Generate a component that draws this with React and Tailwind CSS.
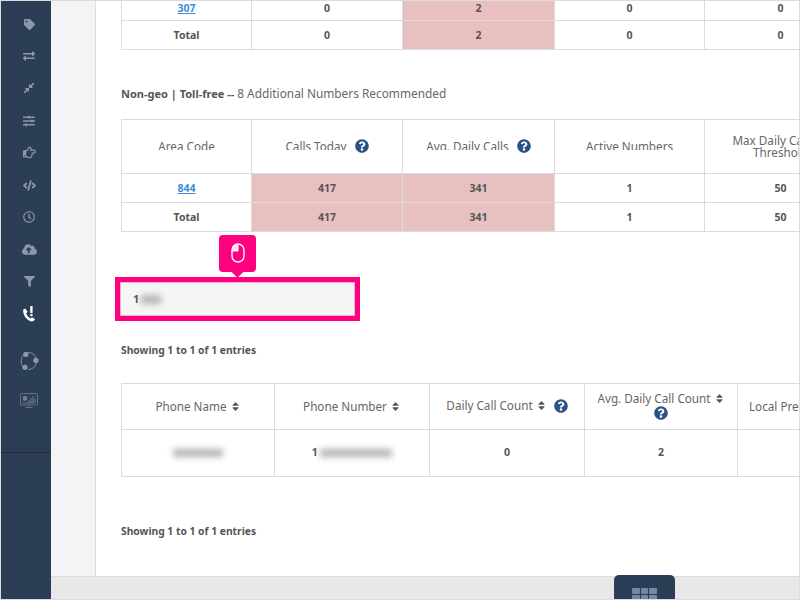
import React from 'react';
import {
  FaTag, FaExchangeAlt, FaCompressAlt, FaSlidersH, FaRegHandPointRight, FaCode,
  FaRegClock, FaCloudUploadAlt, FaFilter, FaSort, FaQuestionCircle,
} from 'react-icons/fa';

const font = "font-['Noto_Sans','Liberation_Sans',sans-serif]";

function PhoneAlert() {
  return (
    <svg width="14" height="16" viewBox="0 0 14 16" fill="white">
      <path d="M3.2 2.6 1.2 3.6C.6 8.6 4.4 14.6 9.4 15.4c1.4.2 3-.8 3.6-2.2l-3-2-1.4 1.2C6.4 11.6 4.6 9 4.2 7l1.4-1.2z" />
      <rect x="8.2" y="0" width="2.4" height="7" rx="0.6" />
      <rect x="8.2" y="8" width="2.4" height="2.2" rx="0.6" />
    </svg>
  );
}

function ShareRing() {
  return (
    <svg width="20" height="20" viewBox="0 0 22 22" fill="#8c98a8" stroke="none">
      <path d="M6 4.2A9 9 0 0 0 5 18M10 20.4a9 9 0 0 0 9-7.4M19 8.4A9 9 0 0 0 10 1.6" fill="none" stroke="#8c98a8" strokeWidth="1" />
      <circle cx="7.5" cy="3.6" r="2.9" />
      <circle cx="18.6" cy="10.4" r="2.9" />
      <circle cx="6.6" cy="18" r="2.9" />
    </svg>
  );
}

function MonitorChart() {
  return (
    <svg width="18" height="16" viewBox="0 0 18 16" fill="none" stroke="#737f90">
      <rect x="0.5" y="0.5" width="17" height="11.5" rx="1" strokeWidth="0.8" />
      <circle cx="5" cy="5.5" r="2.4" fill="#737f90" stroke="none" />
      <path d="M9 10V7M11 10V5M13 10V3M15 10V6" strokeWidth="1" />
      <path d="M2.5 10h12M9 12v1.5M5.5 14.5h7" strokeWidth="0.8" />
    </svg>
  );
}

function MouseIcon() {
  return (
    <svg width="14" height="20" viewBox="0 0 14 20" fill="none" stroke="white" strokeWidth="1.4">
      <path d="M7 1.5V8H1.2V6A5.5 5 0 0 1 7 1.5z" fill="white" fillOpacity="0.85" stroke="none" />
      <rect x="1" y="1" width="12" height="18" rx="6" />
      <path d="M1 8h6V1" strokeWidth="1" />
    </svg>
  );
}

function Help() {
  return <FaQuestionCircle className="inline-block text-[#2b5287] text-[14px] align-[-3px]" />;
}

function Sort() {
  return <FaSort className="inline-block ml-[3px] text-[#555] text-[11px] align-[-1px]" />;
}

function Blur({ className }) {
  return <div className={`inline-block bg-[#b4b4b4] blur-[3px] align-middle ${className}`} />;
}

function NavIcon({ children, className = 'h-[32.2px]' }) {
  return <div className={`flex items-center justify-center text-[#8c98a8] pl-[6px] ${className}`}>{children}</div>;
}

const pink = 'bg-[#e9c0c0]';

function Cell({ children, className = '' }) {
  return (
    <td className={`border border-[#dcdcdc] text-center text-[10.5px] font-bold text-[#555] p-0 ${className}`}>
      {children}
    </td>
  );
}

function Th({ children, className = '' }) {
  return (
    <th className={`border border-[#dcdcdc] text-center text-[11.7px] font-normal text-[#666] leading-[12px] p-0 ${className}`}>
      {children}
    </th>
  );
}

// header text is cut off at the bottom in the screenshot
function Cut({ children }) {
  return <span className="inline-block h-[10px] overflow-hidden leading-[13px]">{children}</span>;
}

export default function App() {
  return (
    <div className={`w-[800px] h-[600px] overflow-hidden flex border border-[#dcdcdc] bg-[#e8e8e8] ${font}`}>
      <aside className="w-[50px] shrink-0 bg-[#2c3e56] flex flex-col pt-[7px]">
        <NavIcon><FaTag size={11} /></NavIcon>
        <NavIcon><FaExchangeAlt size={12} /></NavIcon>
        <NavIcon><FaCompressAlt size={12} /></NavIcon>
        <NavIcon><FaSlidersH size={12} /></NavIcon>
        <NavIcon><FaRegHandPointRight size={13} /></NavIcon>
        <NavIcon><FaCode size={13} /></NavIcon>
        <NavIcon><FaRegClock size={12} /></NavIcon>
        <NavIcon><FaCloudUploadAlt size={15} /></NavIcon>
        <NavIcon><FaFilter size={11} /></NavIcon>
        <NavIcon><PhoneAlert /></NavIcon>
        <NavIcon className="h-[22px] mt-[20px]"><ShareRing /></NavIcon>
        <NavIcon className="h-[16px] mt-[21px]"><MonitorChart /></NavIcon>
        <div className="mt-[43px] h-px bg-[#2b2b2b]" />
      </aside>

      <div className="flex-1 min-w-0 flex flex-col relative">
        <div className="h-[575px] flex min-h-0">
          <div className="w-[45px] shrink-0 bg-[#f3f4f6] border-r border-[#dcdcdc]" />
          <main className="flex-1 min-w-0 bg-white overflow-hidden pl-[25px]">
            <table className="table-fixed border-collapse w-[735px]">
              <colgroup>
                <col className="w-[130px]" /><col className="w-[151px]" /><col className="w-[152px]" /><col className="w-[150px]" /><col className="w-[152px]" />
              </colgroup>
              <tbody>
                <tr className="h-[19px] [&>td]:leading-[12px] [&>td]:pb-[5px]">
                  <Cell className="border-t-0"><a className="text-[#3b8ed6] underline">307</a></Cell>
                  <Cell className="border-t-0">0</Cell>
                  <Cell className={`border-t-0 ${pink}`}>2</Cell>
                  <Cell className="border-t-0">0</Cell>
                  <Cell className="border-t-0">0</Cell>
                </tr>
                <tr className="h-[29px] [&>td]:pt-[2px]">
                  <Cell>Total</Cell><Cell>0</Cell><Cell className={pink}>2</Cell><Cell>0</Cell><Cell>0</Cell>
                </tr>
              </tbody>
            </table>

            <p className="mt-[35px] text-[11.85px] leading-[16px] text-[#666] whitespace-nowrap">
              <b className="text-[11px] text-[#555]">Non-geo | Toll-free --</b> 8 Additional Numbers Recommended
            </p>

            <table className="table-fixed border-collapse w-[735px] mt-[17px]">
              <colgroup>
                <col className="w-[130px]" /><col className="w-[151px]" /><col className="w-[152px]" /><col className="w-[150px]" /><col className="w-[152px]" />
              </colgroup>
              <thead>
                <tr className="h-[54px]">
                  <Th className="pb-[2px]"><Cut>Area Code</Cut></Th>
                  <Th><Cut>Calls Today</Cut> <span className="ml-[5px]"><Help /></span></Th>
                  <Th><Cut>Avg. Daily Calls</Cut> <span className="ml-[5px]"><Help /></span></Th>
                  <Th className="pb-[2px]"><Cut>Active Numbers</Cut></Th>
                  <Th>Max Daily Calls<span className="inline-block w-[14px]" /><br />Threshold</Th>
                </tr>
              </thead>
              <tbody>
                <tr className="h-[29px] [&>td]:pt-[2px]">
                  <Cell><a className="text-[#3b8ed6] underline">844</a></Cell>
                  <Cell className={pink}>417</Cell><Cell className={pink}>341</Cell><Cell>1</Cell><Cell>50</Cell>
                </tr>
                <tr className="h-[29px] [&>td]:pt-[2px]">
                  <Cell>Total</Cell>
                  <Cell className={pink}>417</Cell><Cell className={pink}>341</Cell><Cell>1</Cell><Cell>50</Cell>
                </tr>
              </tbody>
            </table>

            <div className="relative mt-[45px] -ml-[6px] w-[245px] h-[44px] border-[5px] border-[#ff0080] bg-[#f5f5f5] shadow-[inset_0_0_0_1px_#f4b0d0] flex items-center pl-[13px] pt-[2px] text-[11px] font-bold text-[#555]">
              1<Blur className="w-[20px] h-[9px] ml-[2px]" />
              <div className="absolute left-[99px] -top-[47px] w-[37px] h-[37px] rounded-[4px] bg-[#ff0080] flex items-center justify-center">
                <MouseIcon />
                <div className="absolute left-[14px] -bottom-[4px] w-[9px] h-[9px] rotate-45 bg-[#ff0080]" />
              </div>
            </div>

            <p className="mt-[21px] text-[10.3px] leading-[16px] font-bold text-[#555]">Showing 1 to 1 of 1 entries</p>

            <table className="table-fixed border-collapse w-[746px] mt-[25px]">
              <colgroup>
                <col className="w-[153px]" /><col className="w-[155px]" /><col className="w-[155px]" /><col className="w-[153px]" /><col className="w-[130px]" />
              </colgroup>
              <thead>
                <tr className="h-[46px]">
                  <Th>Phone Name<Sort /></Th>
                  <Th>Phone Number<Sort /></Th>
                  <Th>Daily Call Count<Sort /> <span className="ml-1"><Help /></span></Th>
                  <Th className="leading-[14px] pb-[2px]">Avg. Daily Call Count<Sort /><br /><Help /></Th>
                  <Th className="text-left pl-[11px]">Local Presence</Th>
                </tr>
              </thead>
              <tbody>
                <tr className="h-[47px]">
                  <Cell><Blur className="w-[50px] h-[8px]" /></Cell>
                  <Cell>1 <Blur className="w-[72px] h-[8px]" /></Cell>
                  <Cell>0</Cell>
                  <Cell>2</Cell>
                  <Cell />
                </tr>
              </tbody>
            </table>

            <p className="mt-[46px] text-[10.3px] leading-[16px] font-bold text-[#555]">Showing 1 to 1 of 1 entries</p>
          </main>
        </div>

        <div className="flex-1 bg-[#e8e8e8] border-t border-[#dcdcdc] relative">
          <div className="absolute left-[563px] -top-[2px] w-[61px] h-[26px] rounded-t-[5px] bg-[#2c3e56] pt-[13px] pl-[18px]">
            <div className="grid grid-cols-3 gap-[1px] w-[25px]">
              {[0, 1, 2, 3, 4, 5].map((i) => (
                <div key={i} className="h-[6px] rounded-[1px] bg-[#7189a6]" />
              ))}
            </div>
          </div>
        </div>
      </div>
    </div>
  );
}
